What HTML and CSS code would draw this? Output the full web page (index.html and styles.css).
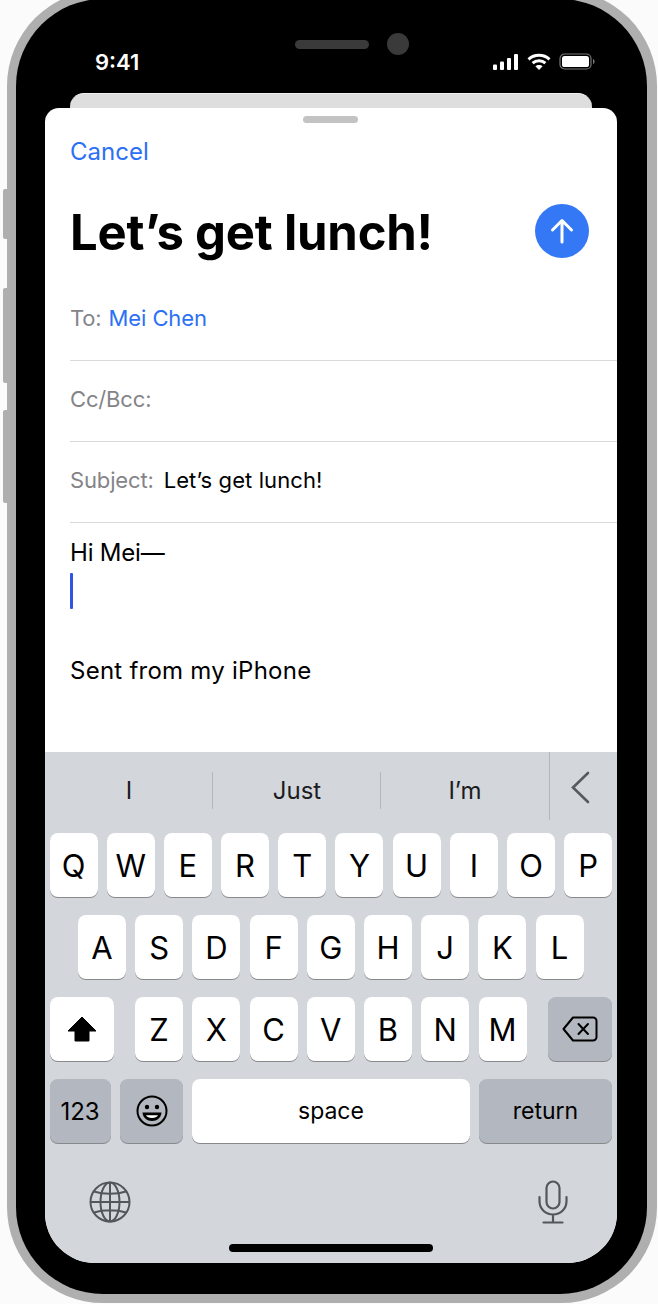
FILE: index.html
```html
<!DOCTYPE html>
<html lang="en">
<head>
    <meta charset="UTF-8">
    <meta name="viewport" content="width=device-width, initial-scale=1.0">
    <title>Mail compose</title>
    <link rel="stylesheet" href="styles.css">
</head>
<body>

    <div class="phone">
        <span class="side-btn side-mute"></span>
        <span class="side-btn side-up"></span>
        <span class="side-btn side-down"></span>

        <div class="bezel">
            <div class="status-bar">
                <span class="time">9:41</span>
                <div class="notch">
                    <span class="speaker"></span>
                    <span class="camera"></span>
                </div>
                <div class="status-icons">
                    <svg width="26" height="16" viewBox="0 0 26 16" fill="#fff">
                        <rect x="0" y="10.5" width="4" height="5.5" rx="1"/>
                        <rect x="7" y="7.5" width="4" height="8.5" rx="1"/>
                        <rect x="14" y="4" width="4" height="12" rx="1"/>
                        <rect x="21" y="0" width="4" height="16" rx="1"/>
                    </svg>
                    <svg width="24" height="17" viewBox="0 0 24 17" fill="none" stroke="#fff" stroke-width="3">
                        <path d="M1.5 6.3C7.3 .9 16.7 .9 22.5 6.3"/>
                        <path d="M5.6 10.2C9.1 7 14.9 7 18.4 10.2"/>
                        <path d="M12 17l-3.6-3.7C10.3 11.7 13.7 11.7 15.6 13.3z" fill="#fff" stroke="none"/>
                    </svg>
                    <svg width="36" height="17" viewBox="0 0 36 17">
                        <rect x="1" y="1" width="31" height="15" rx="4.5" fill="none" stroke="#777" stroke-width="1.2"/>
                        <rect x="3" y="3" width="27" height="11" rx="2.6" fill="#fff"/>
                        <path d="M34 6v5c1-.3 1.6-1.4 1.6-2.5S35 6.300 34 6z" fill="#777"/>
                    </svg>
                </div>
            </div>

            <div class="screen">
                <div class="back-card"></div>
                <div class="sheet">
                    <div class="compose">
                        <span class="grabber"></span>
                        <div class="cancel">Cancel</div>
                        <div class="title-row">
                            <h1>Let’s get lunch!</h1>
                            <span class="send-btn">
                                <svg width="26" height="26" viewBox="0 0 26 26" fill="none" stroke="#fff" stroke-width="3" stroke-linecap="round" stroke-linejoin="round">
                                    <path d="M13 24V3M3.500 12 13 2.500 22.500 12"/>
                                </svg>
                            </span>
                        </div>
                        <div class="field"><span class="field-label">To:</span><span class="recipient">Mei Chen</span></div>
                        <div class="field"><span class="field-label">Cc/Bcc:</span></div>
                        <div class="field"><span class="field-label">Subject:</span><span class="subject">Let’s get lunch!</span></div>
                        <div class="message">
                            <div class="greeting">Hi Mei—</div>
                            <span class="caret"></span>
                            <div class="signature">Sent from my iPhone</div>
                        </div>
                    </div>

                    <div class="keyboard">
                        <div class="suggestions">
                            <div class="suggestion">I</div>
                            <div class="suggestion">Just</div>
                            <div class="suggestion">I’m</div>
                            <div class="collapse">
                                <svg width="20" height="33" viewBox="0 0 20 33" fill="none" stroke="#555a60" stroke-width="2.600" stroke-linecap="round">
                                    <path d="M18 2 3 16.500 18 31"/>
                                </svg>
                            </div>
                        </div>

                        <div class="key-row">
                            <div class="key">Q</div><div class="key">W</div><div class="key">E</div><div class="key">R</div><div class="key">T</div><div class="key">Y</div><div class="key">U</div><div class="key">I</div><div class="key">O</div><div class="key">P</div>
                        </div>
                        <div class="key-row row-middle">
                            <div class="key">A</div><div class="key">S</div><div class="key">D</div><div class="key">F</div><div class="key">G</div><div class="key">H</div><div class="key">J</div><div class="key">K</div><div class="key">L</div>
                        </div>
                        <div class="key-row row-shift">
                            <div class="key key-shift">
                                <svg width="30" height="26" viewBox="0 0 30 26" fill="#000" stroke="#000" stroke-linejoin="round">
                                    <path d="M15 1 29 15H22V25H8V15H1z"/>
                                </svg>
                            </div>
                            <div class="letters">
                                <div class="key">Z</div><div class="key">X</div><div class="key">C</div><div class="key">V</div><div class="key">B</div><div class="key">N</div><div class="key">M</div>
                            </div>
                            <div class="key key-dark key-delete">
                                <svg width="36" height="26" viewBox="0 0 36 26" fill="none" stroke="#000" stroke-width="2" stroke-linejoin="round">
                                    <path d="M11 1.500H31a3.500 3.500 0 0 1 3.500 3.500V21a3.500 3.500 0 0 1-3.500 3.500H11L1.500 13z"/>
                                    <path d="M16.500 8 26 18M26 8 16.500 18" stroke-linecap="round"/>
                                </svg>
                            </div>
                        </div>
                        <div class="key-row row-bottom">
                            <div class="key key-dark key-num">123</div>
                            <div class="key key-dark key-emoji">
                                <svg width="32" height="32" viewBox="0 0 32 32">
                                    <circle cx="16" cy="16" r="14.500" fill="none" stroke="#000" stroke-width="2"/>
                                    <circle cx="11" cy="12" r="2.200"/>
                                    <circle cx="21" cy="12" r="2.200"/>
                                    <path d="M6.500 17.500h19C25 23 21 26 16 26S7 23 6.500 17.500z"/>
                                    <path d="M10 20.200h12C21 22 19 23 16 23s-5-1-6-2.800z" fill="#fff"/>
                                </svg>
                            </div>
                            <div class="key key-space">space</div>
                            <div class="key key-dark key-return">return</div>
                        </div>

                        <div class="kb-footer">
                            <svg width="42" height="42" viewBox="0 0 42 42" fill="none" stroke="#53575c" stroke-width="2">
                                <circle cx="21" cy="21" r="19.500"/>
                                <ellipse cx="21" cy="21" rx="9.500" ry="19.500"/>
                                <path d="M21 1.500v39M1.500 21h39M5 10.500c9 3 23 3 32 0M5 31.500c9-3 23-3 32 0"/>
                            </svg>
                            <svg class="mic" width="30" height="44" viewBox="0 0 30 44" fill="none" stroke="#53575c" stroke-width="2.200" stroke-linecap="round">
                                <rect x="8.500" y="1.500" width="13" height="27" rx="6.500"/>
                                <path d="M1.500 17v4c0 8 6 13.500 13.500 13.500S28.500 29 28.500 21v-4M15 34.500V42.500M5.500 42.500h19"/>
                            </svg>
                        </div>
                        <span class="home-bar"></span>
                    </div>
                </div>
            </div>
        </div>
    </div>

</body>
</html>
```

FILE: styles.css
```css
body {
    margin: 0;
    background-color: #fbfbfb;
    font-family: Inter, "Liberation Sans", sans-serif;
    overflow: hidden;
}

.phone {
    position: relative;
    box-sizing: border-box;
    width: 650px;
    height: 1313px;
    margin: -10px 0 0 7px;
    padding: 9px 10px 9px 9px;
    background-color: #afafaf;
    border-radius: 96px;
}

.side-btn {
    position: absolute;
    left: -4px;
    width: 4px;
    background-color: #afafaf;
    border-radius: 2px 0 0 2px;
}

.side-mute {
    top: 199px;
    height: 50px;
}

.side-up {
    top: 298px;
    height: 95px;
}

.side-down {
    top: 420px;
    height: 93px;
}

.bezel {
    box-sizing: border-box;
    height: 100%;
    padding: 0 30px 31px 29px;
    background-color: #000;
    border-radius: 87px;
    display: flex;
    flex-direction: column;
}

/* status bar */
.status-bar {
    height: 94px;
    flex-shrink: 0;
    display: flex;
    align-items: flex-start;
    color: #fff;
}

.time {
    width: 46px;
    margin: 51px 0 0 50px;
    font-size: 22px;
    font-weight: 600;
    line-height: 24px;
    white-space: nowrap;
}

.notch {
    display: flex;
    align-items: center;
    gap: 18px;
    margin: 34px 0 0 154px;
}

.speaker {
    width: 74px;
    height: 9px;
    border-radius: 5px;
    background-color: #3a3a3a;
}

.camera {
    width: 22px;
    height: 22px;
    border-radius: 50%;
    background-color: #3a3a3a;
}

.status-icons {
    display: flex;
    align-items: center;
    gap: 8px;
    margin: 54px 22px 0 auto;
}

/* screen */
.screen {
    flex: 1;
    display: flex;
    flex-direction: column;
    min-height: 0;
}

.back-card {
    height: 15px;
    flex-shrink: 0;
    margin: 0 25px;
    background-color: #dedede;
    border-top: 1px solid #f2f2f2;
    border-radius: 14px 14px 0 0;
    box-sizing: border-box;
}

.sheet {
    flex: 1;
    display: flex;
    flex-direction: column;
    background-color: #fff;
    border-radius: 14px 14px 50px 50px;
    overflow: hidden;
}

.compose {
    position: relative;
    height: 644px;
    flex-shrink: 0;
    padding-left: 25px;
}

.grabber {
    position: absolute;
    top: 8px;
    left: 258px;
    width: 55px;
    height: 7px;
    border-radius: 4px;
    background-color: #c3c3c3;
}

.cancel {
    padding-top: 29px;
    font-size: 24px;
    line-height: 30px;
    color: #2b70f6;
}

.title-row {
    display: flex;
    align-items: center;
    justify-content: space-between;
    padding-right: 28px;
    margin: 27px 0 12px;
    height: 74px;
}

h1 {
    margin: 0;
    padding-top: 2px;
    font-size: 49px;
    font-weight: 700;
    letter-spacing: -0.2px;
    color: #000;
}

.send-btn {
    width: 54px;
    height: 54px;
    border-radius: 50%;
    background-color: #3478f6;
    display: flex;
    align-items: center;
    justify-content: center;
}

.field {
    height: 81px;
    box-sizing: border-box;
    padding-bottom: 4px;
    border-bottom: 1px solid #d9d9d9;
    display: flex;
    align-items: center;
    gap: 7px;
    font-size: 22px;
}

.field-label {
    letter-spacing: -0.15px;
    color: #848488;
}

.recipient {
    letter-spacing: -0.1px;
    color: #2b70f6;
}

.subject {
    margin-left: 3px;
    letter-spacing: 0.1px;
    color: #000;
}

.message {
    padding-top: 15px;
    font-size: 24px;
    line-height: 30px;
    color: #000;
}

.greeting {
    letter-spacing: -0.2px;
}

.caret {
    display: block;
    width: 3px;
    height: 36px;
    margin-top: 5px;
    border-radius: 1px;
    background-color: #2f55e0;
}

.signature {
    margin-top: 47px;
    letter-spacing: 0.25px;
}

/* keyboard */
.keyboard {
    position: relative;
    flex: 1;
    background-color: #d3d6db;
}

.suggestions {
    display: flex;
    height: 81px;
}

.suggestion {
    flex: 1;
    padding-bottom: 5px;
    display: flex;
    align-items: center;
    justify-content: center;
    font-size: 24px;
    color: #1c1c1e;
    position: relative;
}

.suggestion + .suggestion::before {
    content: "";
    position: absolute;
    left: -1px;
    top: 20px;
    height: 37px;
    border-left: 1px solid #b4b7bc;
}

.collapse {
    width: 68px;
    flex-shrink: 0;
    box-sizing: border-box;
    height: 68px;
    padding: 19px 0 0 20px;
    border-left: 1px solid #b4b7bc;
}

.key-row {
    display: flex;
    gap: 9.2px;
    padding: 0 5px 0 4.5px;
    height: 64px;
    margin-bottom: 18px;
}

.row-middle {
    padding: 0 33px;
}

.row-shift {
    justify-content: space-between;
}

.letters {
    display: flex;
    gap: 9.25px;
}

.key {
    width: 48px;
    height: 64px;
    flex-shrink: 0;
    box-sizing: border-box;
    background-color: #fff;
    border-radius: 8px;
    box-shadow: 0 1px 0 #88898c;
    display: flex;
    align-items: center;
    justify-content: center;
    font-size: 31px;
    color: #000;
}

.key-dark {
    background-color: #b3b7bf;
}

.key-shift {
    width: 64px;
}

.key-delete {
    width: 64px;
}

.key-num {
    width: 61px;
    font-size: 24px;
}

.key-emoji {
    width: 62.5px;
    margin-left: 0.75px;
}

.key-space {
    flex: 1;
    width: auto;
    font-size: 23px;
}

.key-return {
    width: 133px;
    font-size: 23px;
}

.kb-footer {
    display: flex;
    justify-content: space-between;
    align-items: flex-start;
    padding: 20px 49.5px 0 44px;
}

.mic {
    margin-top: -1px;
}

.home-bar {
    position: absolute;
    left: 184px;
    bottom: 11px;
    width: 204px;
    height: 8px;
    border-radius: 4px;
    background-color: #000;
}
```
